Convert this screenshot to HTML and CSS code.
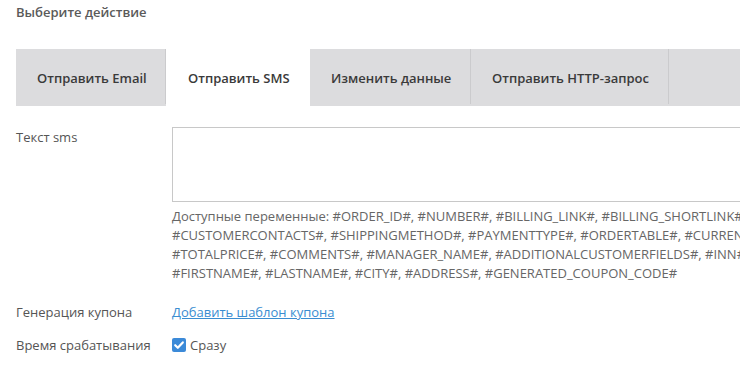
FILE: index.html
```html
<!DOCTYPE html>
<html lang="ru">
<head>
<meta charset="utf-8">
<link rel="stylesheet" href="styles.css">
</head>
<body>
<div class="page">
  <div class="title">Выберите действие</div>
  <div class="tabs">
    <div class="tab">Отправить Email</div>
    <div class="tab active">Отправить SMS</div>
    <div class="tab">Изменить данные</div>
    <div class="tab">Отправить HTTP-запрос</div>
    <div class="tab empty"></div>
  </div>
  <div class="row row-sms">
    <div class="label">Текст sms</div>
    <div class="field">
      <textarea class="textarea"></textarea>
      <div class="help">
        <span class="line">Доступные переменные: #ORDER_ID#, #NUMBER#, #BILLING_LINK#, #BILLING_SHORTLINK#, #ORDER_DATE#,</span>
        <span class="line">#CUSTOMERCONTACTS#, #SHIPPINGMETHOD#, #PAYMENTTYPE#, #ORDERTABLE#, #CURRENCY#,</span>
        <span class="line">#TOTALPRICE#, #COMMENTS#, #MANAGER_NAME#, #ADDITIONALCUSTOMERFIELDS#, #INN#,</span>
        <span class="line">#FIRSTNAME#, #LASTNAME#, #CITY#, #ADDRESS#, #GENERATED_COUPON_CODE#</span>
      </div>
    </div>
  </div>
  <div class="row row-coupon">
    <div class="label">Генерация купона</div>
    <div class="field"><a class="link" href="#">Добавить шаблон купона</a></div>
  </div>
  <div class="row row-time">
    <div class="label">Время срабатывания</div>
    <div class="field">
      <label class="check">
        <span class="box"><svg width="14" height="14" viewBox="0 0 14 14"><path d="M3.2 7.2 L5.8 9.8 L10.8 4.4" fill="none" stroke="#fff" stroke-width="2.2" stroke-linecap="round" stroke-linejoin="round"/></svg></span>
        <span class="check-text">Сразу</span>
      </label>
    </div>
  </div>
</div>
</body>
</html>
```
FILE: styles.css
```css
html, body {
  margin: 0;
  padding: 0;
  overflow: hidden;
  background: #fff;
}
body {
  font-family: "Open Sans", "Liberation Sans", sans-serif;
  font-size: 13px;
  color: #555;
}
.page {
  padding: 3px 0 0 16px;
  width: 900px;
}
.title {
  font-weight: 600;
  line-height: 18px;
  color: #5a5a5a;
}
.tabs {
  display: flex;
  margin-top: 28px;
  height: 57px;
  background: #dcdcde;
  width: 760px;
}
.tab {
  display: flex;
  align-items: center;
  padding: 0 21px;
  font-weight: 600;
  color: #3a3a3a;
  position: relative;
  white-space: nowrap;
}
.tab::after {
  content: "";
  position: absolute;
  right: 0;
  top: 0;
  bottom: 2px;
  width: 1px;
  background: #cbcbcd;
}
.tab.active {
  background: #fff;
}
.tab.active::after,
.tab.empty::after {
  display: none;
}
.tab:first-child {
  width: 108px;
}
.tab:nth-child(2) {
  width: 101px;
  padding-left: 22px;
}
.tab:nth-child(3) {
  width: 119px;
}
.tab:nth-child(4) {
  width: 156px;
}
.tab.empty {
  flex: 1;
}
.row {
  display: grid;
  grid-template-columns: 156px 1fr;
  align-items: start;
}
.label {
  line-height: 18px;
  color: #555;
  white-space: nowrap;
}
.row-sms {
  margin-top: 21px;
}
.row-sms .label {
  padding-top: 1px;
}
.textarea {
  display: block;
  box-sizing: border-box;
  width: 640px;
  height: 75px;
  margin: 0;
  border: 1px solid #c8c8c8;
  border-radius: 0;
  resize: none;
  font-family: inherit;
}
.help {
  margin-top: 5px;
  color: #666;
  line-height: 19px;
}
.line {
  display: block;
  white-space: nowrap;
}
.row-coupon {
  margin-top: 20px;
}
.row-coupon .label,
.row-coupon .field {
  line-height: 18px;
}
.link {
  color: #3a8dd1;
  text-decoration: underline;
}
.row-time {
  margin-top: 15px;
}
.check {
  display: flex;
  align-items: center;
  gap: 4px;
  line-height: 18px;
}
.box {
  width: 14px;
  height: 14px;
  border-radius: 2px;
  background: #3b8ad8;
  display: flex;
}
.check-text {
  color: #555;
}
```
